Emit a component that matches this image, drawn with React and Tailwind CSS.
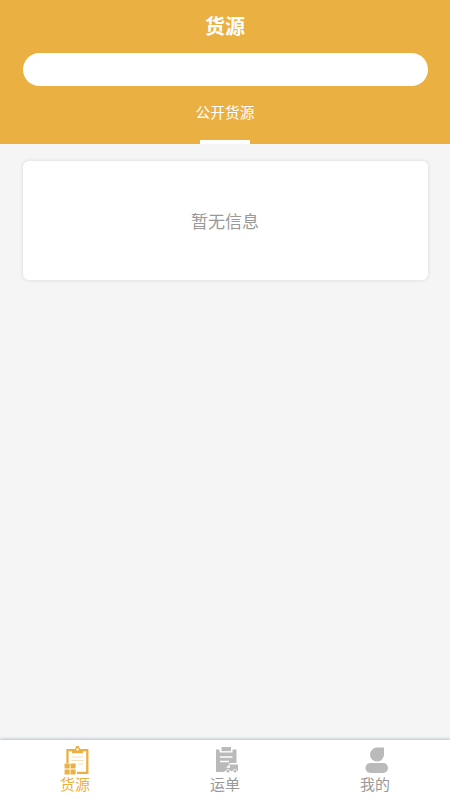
function GoodsIcon() {
  return (
    <svg width="26" height="30" viewBox="0 0 26 30" fill="none">
      <path d="M3.5 18V5.2h19.8v22.6H13" stroke="currentColor" strokeWidth="2.3" />
      <path d="M8 8.2V5.5l2.8-1.2L12.3 1h2.4l1.5 3.3L19 5.5v2.7z" fill="currentColor" />
      <circle cx="13.5" cy="4.4" r="1.2" fill="#fff" />
      <path d="M7.5 12h12M7.5 15.5h12M14 19h5.5" stroke="currentColor" strokeWidth="1.2" opacity=".4" />
      <path
        d="M.6 18.6h5.1v5H.6zM6.5 18.6h5.1v5H6.5zM.6 24.4h5.1v5H.6zM6.5 24.4h5.1v5H6.5z"
        fill="currentColor"
      />
    </svg>
  );
}

function WaybillIcon() {
  return (
    <svg width="26" height="30" viewBox="0 0 26 30">
      <path d="M2 4.5h3.5v3h13v-3h4V18h-6.5l-4 3.5-1.5 5.5H2z" fill="currentColor" />
      <path d="M7.5 2h9.5v4.2H7.5z" fill="currentColor" />
      <path d="M6 12h12.5M6 16.5h9" stroke="#fff" strokeWidth="1.6" />
      <path d="M16 19.5h8V26H11v-3.2l2.3-3.3z" fill="currentColor" />
      <path d="M12.2 22.8l1.9-2.3h1.9v2.3z" fill="#fff" />
      <circle cx="14" cy="26.2" r="1.8" fill="currentColor" stroke="#fff" strokeWidth=".7" />
      <circle cx="21" cy="26.2" r="1.8" fill="currentColor" stroke="#fff" strokeWidth=".7" />
    </svg>
  );
}

function ProfileIcon() {
  return (
    <svg width="26" height="30" viewBox="0 0 26 30" fill="currentColor">
      <path d="M20 2.6v7.2a7 7 0 1 1-7-7.2z" />
      <rect x="1.5" y="18" width="22.5" height="10" rx="4.8" />
    </svg>
  );
}

const tabs = [
  { label: "货源", icon: GoodsIcon, active: true },
  { label: "运单", icon: WaybillIcon },
  { label: "我的", icon: ProfileIcon },
];

export default function App() {
  return (
    <div className="flex h-screen flex-col bg-[#f5f5f5] font-['Noto_Sans_CJK_SC',sans-serif]">
      {/* HEADER */}
      <header className="flex h-36 flex-col items-center bg-[#ebb042] text-white">
        <h1 className="mt-1 h-[49px] text-[20px] leading-[43px] font-bold">货源</h1>
        <div className="w-full px-[22.5px]">
          <div className="h-[33px] rounded-full bg-white" />
        </div>
        <div className="flex flex-1 flex-col items-center justify-between pt-[15px]">
          <span className="text-[14.7px] leading-[22px]">公开货源</span>
          <span className="h-1 w-[50px] bg-white" />
        </div>
      </header>

      <main className="flex-1 px-[22.5px] pt-[17px]">
        <div className="flex h-[119px] items-center justify-center rounded-md bg-white text-[17px] text-[#999] shadow-[0_0_4px_rgba(0,0,0,0.12)]">
          暂无信息
        </div>
      </main>

      {/* TAB BAR */}
      <nav className="flex h-[60px] bg-white shadow-[0_-1px_3px_rgba(130,155,180,0.6)]">
        {tabs.map(({ label, icon: Icon, active }) => (
          <div
            key={label}
            className={`flex flex-1 flex-col items-center pt-[5px] ${
              active ? "text-[#ebb042]" : "text-[#999]"
            }`}
          >
            <div className={`ml-1 ${active ? "" : "text-[#bababa]"}`}>
              <Icon />
            </div>
            <span className="text-[15px] leading-[18px]">{label}</span>
          </div>
        ))}
      </nav>
    </div>
  );
}
